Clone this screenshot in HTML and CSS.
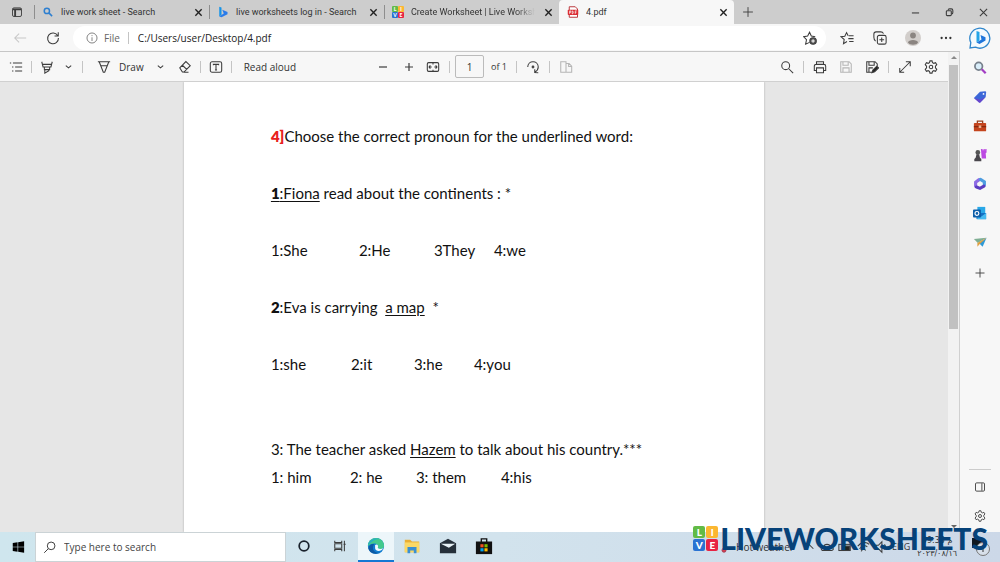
FILE: index.html
```html
<!DOCTYPE html>
<html lang="en">
<head>
<meta charset="utf-8">
<meta name="viewport" content="width=device-width, initial-scale=1">
<title>4.pdf</title>
<link rel="stylesheet" href="styles.css">
</head>
<body class="desktop">
<header class="tabbar">
  <button class="tab-actions" aria-label="Tab actions"><svg class="icon" viewBox="0 0 16 16"><rect x="2" y="2.500" width="12" height="11.500" rx="2"/><path d="M2 4.500h12M5.500 5v9" stroke-width="2.500"/></svg></button>
  <div class="tab"><svg class="icon fav" viewBox="0 0 16 16"><g stroke="#2d7fd0" stroke-width="2"><circle cx="6.500" cy="6.500" r="3.500"/><path d="M9.500 9.500l4 4"/></g></svg><span class="tab-title">live work sheet - Search</span><button class="close" aria-label="Close tab"><svg class="icon tiny" viewBox="0 0 10 10"><path d="M1.500 1.500l7 7m0-7l-7 7"/></svg></button></div>
  <div class="tab"><svg class="icon fav" viewBox="0 0 16 16"><path d="M3 1l3 1v10l-3 2z" fill="#1593e8" stroke="none"/><path d="M7 5l7 3v3l-8 4-3-1 6-4z" fill="#2a7bea" stroke="none"/></svg><span class="tab-title">live worksheets log in - Search</span><button class="close" aria-label="Close tab"><svg class="icon tiny" viewBox="0 0 10 10"><path d="M1.500 1.500l7 7m0-7l-7 7"/></svg></button></div>
  <div class="tab"><span class="live-logo small" aria-hidden="true"><b>L</b><b>I</b><b>V</b><b>E</b></span><span class="tab-title fade">Create Worksheet | Live Worksheets</span><button class="close" aria-label="Close tab"><svg class="icon tiny" viewBox="0 0 10 10"><path d="M1.500 1.500l7 7m0-7l-7 7"/></svg></button></div>
  <div class="tab active"><svg class="icon fav" viewBox="0 0 16 16"><path d="M3 1h8l3 3v11H3z" fill="#fff" stroke="#b3262b"/><rect x="1" y="5" width="14" height="7" rx="1" fill="#dc2c33" stroke="none"/><path d="M3.500 10.500v-4h1.500v2H3.500M7 6.500v4c2 0 2-4 0-4M11 10.500v-4h2M11 8.500h1.500" stroke="#fff" stroke-width=".9"/></svg><span class="tab-title">4.pdf</span><button class="close" aria-label="Close tab"><svg class="icon tiny" viewBox="0 0 10 10"><path d="M1.500 1.500l7 7m0-7l-7 7"/></svg></button></div>
  <button class="new-tab" aria-label="New tab"><svg class="icon" viewBox="0 0 16 16"><path d="M8 1.500v13M1.500 8h13"/></svg></button>
  <div class="window-controls">
    <button aria-label="Minimize"><svg class="icon tiny" viewBox="0 0 10 10"><path d="M1 5.500h8"/></svg></button>
    <button aria-label="Restore"><svg class="icon tiny" viewBox="0 0 10 10"><rect x="1.500" y="3" width="5.500" height="5.500" rx="1"/><path d="M3.500 2.500c0-1 .5-1.500 1.500-1.500h2c1 0 1.700.7 1.700 1.700v2.300c0 1-.5 1.500-1.200 1.500"/></svg></button>
    <button aria-label="Close window"><svg class="icon tiny" viewBox="0 0 10 10"><path d="M1 1l8 8m0-8l-8 8"/></svg></button>
  </div>
</header>
<nav class="navbar" aria-label="Browser">
  <button class="back" aria-label="Back"><svg class="icon" viewBox="0 0 16 16"><path d="M15 8H2m5-5L2 8l5 5"/></svg></button>
  <button class="reload" aria-label="Refresh"><svg class="icon" viewBox="0 0 16 16"><path d="M13.500 5.500A6.200 6.200 0 1 0 14.200 8M14 1.500v4.200H9.800"/></svg></button>
  <div class="address">
    <svg class="icon info" viewBox="0 0 16 16"><circle cx="8" cy="8" r="6.700"/><path d="M8 7v5M8 4.200v1.300"/></svg>
    <span class="scheme">File</span><span class="rule"></span>
    <input class="url" type="text" aria-label="Address" value="C:/Users/user/Desktop/4.pdf">
    <button aria-label="Add to favorites"><svg class="icon" viewBox="0 0 16 16"><path d="M7.500 13l-4.500 2 1-5L.7 6.500l4.600-.7L7.500 1.500l2 4.300 4.500.7"/><circle cx="11.500" cy="11.500" r="3.700" fill="#555"/><path d="M11.500 9.500v4m-2-2h4" stroke="#fff"/></svg></button>
  </div>
  <div class="nav-actions">
    <button aria-label="Favorites"><svg class="icon" viewBox="0 0 16 16"><path d="M8 12l-4 2.500.8-4.700L1 6.500l4.500-.6L7.500 1.800l1.800 3.700M10 5.500h5.500M9.500 8.700h6M10.500 12h5"/></svg></button>
    <button aria-label="Collections"><svg class="icon" viewBox="0 0 16 16"><rect x="5" y="5" width="10" height="10" rx="2"/><path d="M10 7.300v5.400M7.300 10h5.400M3 11.500C1.500 10.500 1 9 1 7V3.500C1 2 2 1 3.500 1H9c1.500 0 2.500 1 3 2"/></svg></button>
    <button aria-label="Profile"><svg class="avatar" viewBox="0 0 16 16"><circle cx="8" cy="8" r="8" fill="#d2cecb"/><circle cx="8" cy="5.500" r="2.900" fill="#8b8581"/><path d="M3 12.500c0-3.500 10-3.500 10 0-1.500 3-8.500 3-10 0z" fill="#8b8581"/></svg></button>
    <button aria-label="Settings and more"><svg class="icon" viewBox="0 0 16 16"><g fill="#333" stroke="none"><circle cx="3" cy="8" r="1.300"/><circle cx="8" cy="8" r="1.300"/><circle cx="13" cy="8" r="1.300"/></g></svg></button>
  </div>
</nav>
<div class="workspace">
  <main class="viewer">
    <div class="viewer-main">
      <div class="toolbar" role="toolbar" aria-label="PDF tools">
        <div class="tools-left">
          <button class="t-contents" aria-label="Contents"><svg class="icon" viewBox="0 0 16 16"><path d="M1 3.500h1.500M4.500 3.500H15M3.500 8H5M7 8h8M3.500 12.500H5M7 12.500h8"/></svg></button>
          <span class="rule"></span>
          <button class="t-mark" aria-label="Highlight"><svg class="icon" viewBox="0 0 16 16"><path d="M2 2l1.500 6h9L14 2M3 5h10M5 8v3h6V8M5.500 11v4l5-3"/></svg></button>
          <button class="t-chev" aria-label="Highlight options"><svg class="icon tiny" viewBox="0 0 10 10"><path d="M2 4l3 2.500L8 4"/></svg></button>
          <span class="rule"></span>
          <button class="t-draw"><svg class="icon" viewBox="0 0 16 16"><path d="M1 2h14M2.500 2l4.700 12h1.600l4.700-12M4.500 6.500h7"/></svg>Draw</button>
          <button class="t-chev wide" aria-label="Draw options"><svg class="icon tiny" viewBox="0 0 10 10"><path d="M2 4l3 2.500L8 4"/></svg></button>
          <button class="t-erase" aria-label="Erase"><svg class="icon" viewBox="0 0 16 16"><path d="M2 9l7-7.200 5 4.700-7.200 7.300H5zM5 6l5 4.800M6.500 14H12"/></svg></button>
          <span class="rule"></span>
          <button class="t-text" aria-label="Add text"><svg class="icon" viewBox="0 0 16 16"><rect x="1.500" y="2" width="13" height="12" rx="2"/><path d="M5 6V5h6v1M8 5v6.500M6.800 11.500h2.400"/></svg></button>
          <span class="rule"></span>
          <button class="t-read">Read aloud</button>
        </div>
        <div class="tools-mid">
          <button class="zoom" aria-label="Zoom out"><svg class="icon small-icon" viewBox="0 0 12 12"><path d="M2 6h8"/></svg></button>
          <button class="zoom" aria-label="Zoom in"><svg class="icon small-icon" viewBox="0 0 12 12"><path d="M2 6h8M6 2v8"/></svg></button>
          <button aria-label="Fit to width"><svg class="icon" viewBox="0 0 16 16"><rect x="1.500" y="3" width="13" height="10" rx="1.500"/><path d="M3.500 8h3M5 6.200L3.500 8 5 9.800M12.500 8h-3M11 6.200L12.500 8 11 9.800M8 3v2m0 6v2"/></svg></button>
          <span class="rule"></span>
          <input class="page-no" type="text" aria-label="Page number" value="1"><span class="of">of 1</span>
          <span class="rule"></span>
          <button aria-label="Rotate"><svg class="icon" viewBox="0 0 16 16"><path d="M2 8c0-8 12-8 12 0 0 3-1.500 4.500-4 6M10 10.500V14.300l4 .2"/><circle cx="8" cy="8" r="1"/></svg></button>
          <span class="rule"></span>
          <button class="dim" aria-label="Page view"><svg class="icon" viewBox="0 0 16 16"><path d="M8 2H2v12h6zM8 4h3.500L14.500 7v7H8M11 4v3.500h3"/></svg></button>
        </div>
        <div class="tools-right">
          <button aria-label="Find"><svg class="icon" viewBox="0 0 16 16"><circle cx="6.500" cy="6.500" r="4.500"/><path d="M10 10l5 5"/></svg></button>
          <span class="rule"></span>
          <button aria-label="Print"><svg class="icon" viewBox="0 0 16 16"><path d="M4 12H1.500V7c0-1.500.5-2 2-2h9c1.500 0 2 .5 2 2v5H12M4 5V2h8v3M4 9h8v5.500H4z"/></svg></button>
          <button class="dim" aria-label="Save"><svg class="icon" viewBox="0 0 16 16"><path d="M2 2h9.500L14 4.500V14H2zM4.500 2v4h6V2M4.500 14V9h7v5"/></svg></button>
          <button aria-label="Save as"><svg class="icon" viewBox="0 0 16 16"><path d="M8 14H2V2h9.500L14 4.500V7M4.500 2v4h6V2M4.500 14V9H9"/><path d="M8 14.500l1-3 4.500-4.500 2 2-4.500 4.500z" fill="#222"/></svg></button>
          <span class="rule"></span>
          <button aria-label="Full screen"><svg class="icon" viewBox="0 0 16 16"><path d="M2 14L14 2M9 2h5v5M2 9v5h5"/></svg></button>
          <button aria-label="PDF settings"><svg class="icon" viewBox="0 0 16 16"><path d="M6.800 1h2.400l.5 2 1.500.8 2-.7 1.400 2.200-1.500 1.700v2l1.500 1.700-1.400 2.200-2-.7-1.500.8-.5 2H6.800l-.5-2-1.500-.8-2 .7-1.400-2.200L2.900 9V7L1.400 5.300l1.400-2.200 2 .7L6.300 3z"/><circle cx="8" cy="8" r="2"/></svg></button>
        </div>
      </div>
      <div class="canvas">
        <article class="sheet">
          <h1 class="line"><b class="red">4]</b>Choose the correct pronoun for the underlined word:</h1>
          <p class="line"><u><b>1</b>:Fiona</u> read about the continents : *</p>
          <div class="line choices first"><span>1:She</span><span>2:He</span><span>3They</span><span>4:we</span></div>
          <p class="line"><b>2</b>:Eva is carrying&nbsp; <u>a map</u>&nbsp; *</p>
          <div class="line choices second"><span>1:she</span><span>2:it</span><span>3:he</span><span>4:you</span></div>
          <div class="question">
            <p class="line">3: The teacher asked <u>Hazem</u> to talk about his country.***</p>
            <div class="line choices third"><span>1: him</span><span>2: he</span><span>3: them</span><span>4:his</span></div>
          </div>
        </article>
      </div>
    </div>
    <div class="scrollbar" aria-hidden="true"><span class="arrow up"></span><span class="thumb"></span><span class="arrow down"></span></div>
  </main>
  <aside class="sidebar" aria-label="Sidebar">
    <button class="bing" aria-label="Bing chat"><svg viewBox="0 0 24 24"><path d="M2 22l.8-5.500A10 10 0 1 1 7.500 21.200z" fill="#f4fafd" stroke="#2f86cc" stroke-width="1.300"/><path d="M8.500 5l3 1v8.500l-3 2z" fill="#25a5e8"/><path d="M12.500 9l5 2.200v3.300L11.500 18l-3-1.500 5-3z" fill="#1f76dc"/></svg></button>
    <button aria-label="Search"><svg viewBox="0 0 16 16" fill="none"><circle cx="6.500" cy="6" r="4.300" fill="#d9eefa" stroke="#77808b" stroke-width="2"/><path d="M10 9.500l4.500 4.500" stroke="#a23dc3" stroke-width="2.600"/></svg></button>
    <button aria-label="Shopping"><svg viewBox="0 0 16 16"><path d="M1 9l7-7 6-.5c1 0 1 1 1 1L14.500 8 8 14.500z" fill="#3c67d8"/><path d="M1 9l6 5.500 1 .2L14.500 8 8 11z" fill="#6746cd"/><circle cx="12" cy="4.500" r="1" fill="#fff"/></svg></button>
    <button aria-label="Tools"><svg viewBox="0 0 16 16"><path d="M5 5V2.500h6V5" fill="none" stroke="#97401e" stroke-width="1.500"/><rect x="1" y="4.500" width="14" height="9.500" rx="1" fill="#c4441d"/><path d="M1 8h14v1.500H1z" fill="#87290e"/><rect x="6.500" y="7.300" width="3" height="3" fill="#efb08c"/></svg></button>
    <button aria-label="Games"><svg viewBox="0 0 16 16"><path d="M9 1h2v1.500h1V1h1.500v1.500H14V1h1.500v4l-1 1 .5 6H10z" fill="#bc4ae2"/><circle cx="5.500" cy="5" r="2.700" fill="#555"/><path d="M4 7h3l1 4 1.500 1.500V15h-8v-2.500L3 11z" fill="#49464c"/></svg></button>
    <button aria-label="Microsoft 365"><svg viewBox="0 0 16 16" fill="none" stroke-width="3.600" stroke-linecap="round"><path d="M3 10.500V6l4-3" stroke="#8d6be4"/><path d="M8.500 2.800L13 5.500V9" stroke="#4d9de0"/><path d="M12.500 10.500L8 13l-4-1.500" stroke="#5a3cc0"/></svg></button>
    <button aria-label="Outlook"><svg viewBox="0 0 16 16"><path d="M5 1h9v7H5z" fill="#29a8e8"/><path d="M4 8h11v7H4z" fill="#1470c4"/><path d="M15 8l-7 5-3-2v4h10z" fill="#46baf0"/><rect y="4" width="9" height="9" rx="1" fill="#0b5da8"/><circle cx="4.500" cy="8.500" r="2.200" fill="none" stroke="#fff" stroke-width="1.300"/></svg></button>
    <button aria-label="Drop"><svg viewBox="0 0 16 16"><path d="M1 4.500L15.500 3 5.500 9z" fill="#7fae93"/><path d="M15.500 3L11 13.500 7 9.500z" fill="#2f9ad6"/><path d="M15.500 3L5 9v4.500l2.500-3z" fill="#e0a040"/></svg></button>
    <button class="customize" aria-label="Customize"><svg class="icon" viewBox="0 0 16 16"><path d="M8 2v12M2 8h12"/></svg></button>
    <div class="side-bottom">
      <button aria-label="Hide sidebar"><svg class="icon" viewBox="0 0 16 16"><rect x="2" y="2.500" width="12" height="11" rx="1.500"/><path d="M10.500 3v10"/></svg></button>
      <button aria-label="Sidebar settings"><svg class="icon" viewBox="0 0 16 16"><path d="M6.800 1h2.400l.5 2 1.500.8 2-.7 1.400 2.200-1.500 1.700v2l1.500 1.700-1.400 2.200-2-.7-1.500.8-.5 2H6.800l-.5-2-1.500-.8-2 .7-1.400-2.200L2.900 9V7L1.400 5.300l1.400-2.200 2 .7L6.300 3z"/><circle cx="8" cy="8" r="2"/></svg></button>
    </div>
  </aside>
</div>
<footer class="taskbar">
  <button class="start" aria-label="Start"><svg viewBox="0 0 16 16"><path d="M2 3.500l5.500-.8v5H2zM8.200 2.600L15 1.500v6.200H8.200zM2 8.400h5.500v5L2 12.600zM8.200 8.400H15v6.200l-6.800-1.100z"/></svg></button>
  <label class="search"><svg class="icon" viewBox="0 0 16 16"><circle cx="10" cy="6" r="4.700"/><path d="M6.500 9.500l-5 5"/></svg><input type="text" placeholder="Type here to search" aria-label="Type here to search"></label>
  <div class="apps">
    <button aria-label="Cortana"><svg viewBox="0 0 16 16"><circle cx="8" cy="8" r="5.500" fill="none" stroke="#19222c" stroke-width="2"/></svg></button>
    <button aria-label="Task view"><svg class="icon" viewBox="0 0 16 16"><path d="M2 2v2h8V2M2 14v-2h8v2M2 5.500h8v5H2zM13 2v12M12 6h2.500"/></svg></button>
    <button class="current" aria-label="Edge"><svg class="big" viewBox="0 0 20 20"><circle cx="10" cy="10" r="9" fill="#117dd0"/><path d="M1 10C1 3 8 0 13 1.700c5 1.800 6.500 6.300 5.800 9C18 14 12 14 12 11.500 14 8 7 4.500 1 10z" fill="#43c98d"/><path d="M1 9c1-5 8-9 13-6.700C9 2 5 5 1 9z" fill="#25adc9"/><path d="M8 8c-4 5 1 11 6.500 9C10 20 2 18.500 1.500 12 3 8 6 7 8 8z" fill="#0c59a4"/><path d="M9 9c2-2 4.300.5 3 2.500 0 2 3.500 2.500 6 1-2 4-8.500 4-9 0z" fill="#f4fbff"/></svg></button>
    <button aria-label="File Explorer"><svg class="big" viewBox="0 0 20 20"><path d="M2 3h6l2 2h8v12H2z" fill="#e9ae35"/><path d="M2 6h16v11H2z" fill="#fbd866"/><path d="M5 18v-7h10v7h-3v-3H8v3z" fill="#3a8fd2"/></svg></button>
    <button aria-label="Mail"><svg class="big" viewBox="0 0 20 20"><path d="M1 7l9-5 9 5v11H1z" fill="#26303a"/><path d="M2 7.500h16L11 12z" fill="#e8f2f6"/></svg></button>
    <button aria-label="Store"><svg class="big" viewBox="0 0 20 20"><path d="M7 6V2h6v4" fill="none" stroke="#111" stroke-width="1.500"/><path d="M1 5h18v14H1z" fill="#111"/><path d="M6 8h3.500v3.500H6z" fill="#f25022"/><path d="M10.500 8H14v3.500h-3.500z" fill="#7fba00"/><path d="M6 12.500h3.500V16H6z" fill="#00a4ef"/><path d="M10.500 12.500H14V16h-3.500z" fill="#ffb900"/></svg></button>
  </div>
  <div class="tray">
    <svg class="icon temp" viewBox="0 0 10 16"><path d="M5 2v8" stroke="#d84050" stroke-width="2"/><circle cx="5" cy="12" r="2.500" fill="#d84050" stroke="#a23b55"/></svg>
    <span class="weather">Hot weather</span>
    <svg class="icon" viewBox="0 0 16 16"><path d="M3 10l5-5 5 5"/></svg>
    <svg class="icon" viewBox="0 0 16 16"><path d="M4 12C0 12 1 7 4 8c1-4 7-4 8 0 4 0 4 4 1 4z"/></svg>
    <svg class="icon" viewBox="0 0 16 16"><rect x="1" y="5" width="13" height="7"/><path d="M7 7h6v5H7z" fill="#222"/></svg>
    <svg class="icon" viewBox="0 0 16 16"><path d="M2 7c4-5 10-5 13-2M4 10c3-4 7-4 9-2M6 13c1-3 4-3 5-1"/></svg>
    <svg class="icon" viewBox="0 0 16 16"><path d="M2 6h3l4-4v12l-4-4H2zM12 5c1.500 2 1.500 4 0 6"/></svg>
    <span class="lang">ENG</span>
    <time class="clock" dir="ltr"><span>09:35 م</span><span>٢٠٢٣/٠٨/١٦</span></time>
    <button class="notice" aria-label="Notifications, 1 new"><svg viewBox="0 0 20 20"><path d="M1 1h12v10H7l-2 3v-3H1z" fill="#101820"/><circle cx="12" cy="12" r="6.500" fill="#d8e0ea" stroke="#777"/><path d="M10.500 10L12 8.800V15" fill="none" stroke="#333"/></svg></button>
  </div>
  <div class="watermark"><span class="live-logo" aria-hidden="true"><b>L</b><b>I</b><b>V</b><b>E</b></span><strong>LIVEWORKSHEETS</strong></div>
</footer>
</body>
</html>
```
FILE: styles.css
```css
*{box-sizing:border-box}
body,h1,p{margin:0}
.desktop{height:100vh;display:flex;flex-direction:column;overflow:hidden;font:10px/16px "Open Sans","Noto Sans",sans-serif;color:#333;background:#f7f7f7}
button{display:flex;align-items:center;justify-content:center;padding:0;border:0;background:none;color:inherit;font:inherit;flex:none}
input{border:0;background:none;padding:0;color:inherit;font:inherit;min-width:0}
svg{display:block;flex:none;width:14px;height:14px}
.icon{fill:none;stroke:#3c3c3c;stroke-width:1.2}
svg.tiny{width:9px;height:9px}
svg.small-icon{width:12px;height:12px}
svg.fav{width:12px;height:12px}
svg.big{width:18px;height:18px}
svg.avatar{width:16px;height:16px}
.rule{flex:none;width:1px;height:12px;background:#c4c4c4}
.dim{opacity:.35}

.tabbar{display:flex;height:24px;flex:none;background:#cdcdcd;font-family:Roboto,"Open Sans",sans-serif;font-size:9px}
.tab-actions{width:34px}
.tab-actions svg{width:12px;height:12px}
.tab{position:relative;display:flex;align-items:center;gap:7px;flex:0 1 175px;min-width:0;padding:0 5px 0 8px}
.tab::before{content:"";position:absolute;left:0;top:5px;width:1px;height:14px;background:#8e8e8e}
.tab.active{background:#f7f7f7;border-radius:4px 4px 0 0}
.tab.active::before{display:none}
.tab-title{flex:1;min-width:0;overflow:hidden;white-space:nowrap}
.fade{mask-image:linear-gradient(90deg,#000 85%,transparent)}
.close{width:12px;height:16px}
.close .icon{stroke:#222;stroke-width:1.5}
.new-tab{width:28px}
.new-tab svg{width:12px;height:12px}
.window-controls{display:flex;margin-left:auto}
.window-controls button{width:34px}

.navbar{display:flex;align-items:center;height:27px;flex:none;background:#f7f7f7}
.back{width:40px;opacity:.25}
.reload{width:25px}
.address{display:flex;align-items:center;flex:1;height:24px;margin:0 4px 0 8px;padding:0 9px 0 13px;border-radius:12px;background:#fff}
.address .info{width:12px;height:12px;margin-right:6px;stroke:#777}
.scheme{color:#666;margin-right:8px}
.url{flex:1;margin-left:9px;color:#222}
.nav-actions{display:flex;margin-right:38px}
.nav-actions button{width:33px}

.workspace{display:flex;flex:1;min-height:0}
.viewer{display:flex;flex:1;min-width:0;border-top:1px solid #c6c6c6;border-right:1px solid #d0d0d0}
.viewer-main{display:flex;flex-direction:column;flex:1;min-width:0}
.toolbar{display:flex;align-items:center;height:30px;flex:none;padding:0 10px 0 9px;border-bottom:1px solid #d0d0d0;background:#f7f7f7}
.tools-left,.tools-mid,.tools-right{display:flex;align-items:center}
.tools-left,.tools-right{flex:1 1 0}
.tools-left{gap:8px}
.t-chev{width:12px}
.t-draw{gap:8px;padding-left:6px}
.t-chev.wide{margin:0 3px}
.t-read{padding-left:4px}
.tools-mid{gap:9px}
.zoom{width:17px}
.page-no{width:29px;height:23px;border:1px solid #bbb;border-radius:2px;text-align:center;margin-left:-4px}
.of{margin-left:-2px;font-size:9px}
.tools-right{justify-content:flex-end;gap:12px}
.tools-right .rule{margin:0 -3px}
.canvas{display:flex;justify-content:center;flex:1;min-height:0;overflow:hidden;background:#e6e6e6}
.sheet{display:flex;flex-direction:column;gap:29px;width:61.2%;padding:40px 0 0 87px;background:#fff;box-shadow:0 0 2px #aaa;font:15px/28px Lato,"Open Sans",sans-serif;color:#111}
.line{font-size:15px;font-weight:400;white-space:nowrap}
.line b{font-weight:800}
.line u{text-underline-offset:2px}
.red{color:#e8201c}
.choices{display:grid}
.first{grid-template-columns:88px 75px 60px auto}
.second{grid-template-columns:80px 63px 60px auto}
.third{grid-template-columns:79px 66px 85px auto}
.question{padding-top:28px}
.scrollbar{display:flex;flex-direction:column;width:11px;padding:4px 0;background:#f2f2f2}
.arrow{align-self:center;border:3px solid transparent}
.arrow.up{border-top:0;border-bottom-color:#888}
.arrow.down{border-bottom:0;border-top-color:#666;margin-top:auto}
.thumb{width:9px;height:56%;margin:6px 1px 0;background:#c1c1c1}
.sidebar{display:flex;flex-direction:column;align-items:center;width:40px;margin-top:-27px;padding:1px 0 2px;background:#f7f7f7}
.sidebar button{width:40px;height:29px}
.sidebar .bing{height:25px;margin-bottom:3px}
.sidebar .customize{margin-top:2px}
.bing svg{width:24px;height:24px}
.side-bottom{display:flex;flex-direction:column;margin-top:auto}
.side-bottom::before{content:"";width:22px;height:1px;margin:0 auto 2px;background:#ccc}
.sidebar svg.icon{width:12px;height:12px}

.taskbar{position:relative;display:flex;height:30px;flex:none;background:linear-gradient(90deg,#cfe6ee,#d2e3ed 50%,#ccd8e8)}
.start{width:35px}
.search{display:flex;align-items:center;gap:8px;width:251px;padding:0 7px;border:1px solid #cbd3d6;background:#fff}
.search svg{width:13px;height:13px}
.search input{flex:1}
.search input::placeholder{color:#444;opacity:1}
.apps{display:flex}
.apps button{width:36px;border-bottom:2px solid transparent}
.apps .current{background:#edf6fa;border-color:#1478d4}
.tray{display:flex;align-items:center;gap:4px;margin-left:auto;padding-right:9px}
.temp{width:8px}
.weather{margin:0 4px}
.lang{font-size:9px}
.clock{display:flex;flex-direction:column;align-items:center;margin-left:3px;font:8px/13px "DejaVu Sans",sans-serif}
.notice{margin-left:10px}
.notice svg{width:20px;height:20px}
.watermark{position:absolute;right:12px;bottom:8px;display:flex;align-items:center;gap:2px;pointer-events:none}
.watermark strong{font:900 30px/32px Lato,sans-serif;color:#064279}
.live-logo{display:grid;grid-template-columns:12px 12px;gap:1px;flex:none}
.live-logo b{display:flex;align-items:center;justify-content:center;height:12px;border-radius:2px;color:#fff;font:900 10px/12px Lato,sans-serif;background:#62bb46}
.live-logo b:nth-child(2){background:#fbb731}
.live-logo b:nth-child(3){background:#2a73d2}
.live-logo b:nth-child(4){background:#e72444}
.live-logo.small{grid-template-columns:6px 6px;gap:0}
.live-logo.small b{height:6px;border-radius:1px;font-size:5px;line-height:6px}
```
